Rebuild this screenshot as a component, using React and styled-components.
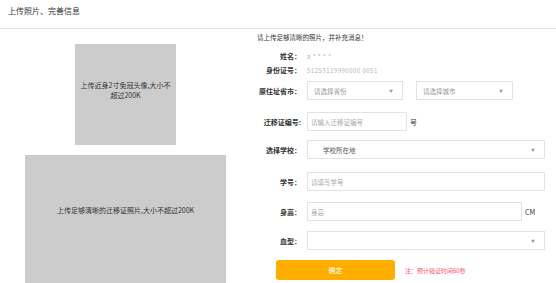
import React from 'react'
import styled, { createGlobalStyle } from 'styled-components'

const GlobalStyle = createGlobalStyle`
  html, body { margin: 0; padding: 0; background: #fff; }
  body {
    font-family: "Noto Sans CJK SC", "Noto Sans", sans-serif;
    color: #333;
  }
`

function App() {
  return (
    <>
      <GlobalStyle />
      <Header>上传照片、完善信息</Header>
      <Main>
        <PhotoColumn>
          <PhotoBox w={101} h={101} pt={37}>
            上传近身2寸免冠头像,大小不超过200K
          </PhotoBox>
          <PhotoBox w={201} h={134} pt={51}>
            上传足够清晰的迁移证照片,大小不超过200K
          </PhotoBox>
        </PhotoColumn>
        <FormColumn>
          <Notice>请上传足够清晰的照片，并补充消息！</Notice>
          <Row h={12} mt={8}>
            <Label>姓名：</Label>
            <Value>a * * * *</Value>
          </Row>
          <Row h={12} mt={2}>
            <Label>身份证号：</Label>
            <Value>51253119990000 0051</Value>
          </Row>
          <Row mt={5}>
            <Label>原住址省市：</Label>
            <Pair>
              <SelectBox w={96}>
                请选择省份<Arrow>▼</Arrow>
              </SelectBox>
              <SelectBox w={97}>
                请选择城市<Arrow>▼</Arrow>
              </SelectBox>
            </Pair>
          </Row>
          <Row mt={12}>
            <Label>迁移证编号:</Label>
            <Field w={100} placeholder="请输入迁移证编号" />
            <Suffix>号</Suffix>
          </Row>
          <Row mt={9}>
            <Label>选择学校：</Label>
            <SelectBox w={238} dark indent={15}>
              学校所在地<Arrow>▼</Arrow>
            </SelectBox>
          </Row>
          <Row mt={13}>
            <Label>学号：</Label>
            <Field w={238} placeholder="请填写学号" />
          </Row>
          <Row mt={11}>
            <Label>身高：</Label>
            <Field w={215} placeholder="身高" />
            <Suffix>CM</Suffix>
          </Row>
          <Row mt={10}>
            <Label>血型：</Label>
            <SelectBox w={238}>
              <span />
              <Arrow>▼</Arrow>
            </SelectBox>
          </Row>
          <Row h={20} mt={10}>
            <Submit>确定</Submit>
            <Hint>注：预计验证时间60秒</Hint>
          </Row>
        </FormColumn>
      </Main>
    </>
  )
}

export default App

const Header = styled.div`
  height: 29px;
  box-sizing: border-box;
  padding: 6px 0 0 8px;
  font-size: 8px;
  line-height: 10px;
  color: #333;
  border-bottom: 1px solid #e4e4e4;
`

const Main = styled.div`
  display: flex;
`

const PhotoColumn = styled.div`
  width: 251px;
  flex-shrink: 0;
  display: flex;
  flex-direction: column;
  align-items: center;
  gap: 10px;
  padding-top: 15px;
`

const PhotoBox = styled.div`
  width: ${p => p.w}px;
  height: ${p => p.h}px;
  box-sizing: border-box;
  padding: ${p => p.pt}px 4px 0;
  background: #cccccc;
  font-size: 7px;
  line-height: 9.5px;
  text-align: center;
  color: #333;
`

const FormColumn = styled.div`
  flex: 1;
  display: flex;
  flex-direction: column;
  padding-top: 4px;
`

const Notice = styled.div`
  margin-left: 6px;
  font-size: 6.5px;
  line-height: 9px;
  color: #333;
`

const Row = styled.div`
  display: flex;
  align-items: center;
  height: ${p => p.h || 19}px;
  margin-top: ${p => p.mt || 0}px;
`

const Label = styled.div`
  width: 50px;
  flex-shrink: 0;
  margin-right: 6px;
  text-align: right;
  white-space: nowrap;
  font-size: 7px;
  font-weight: bold;
  color: #333;
`

const Value = styled.div`
  font-size: 6px;
  color: #b5b5b5;
  letter-spacing: 0.5px;
`

const Pair = styled.div`
  display: flex;
  gap: 13px;
`

const SelectBox = styled.div`
  width: ${p => p.w}px;
  height: 19px;
  box-sizing: border-box;
  display: flex;
  align-items: center;
  justify-content: space-between;
  padding: 0 9px 0 ${p => p.indent || 6}px;
  border: 1px solid #e3e3e3;
  background: #fff;
  font-size: 6.5px;
  color: ${p => (p.dark ? '#555' : '#999')};
`

const Arrow = styled.span`
  font-size: 4px;
  color: #999;
`

const Field = styled.input`
  width: ${p => p.w}px;
  height: 19px;
  box-sizing: border-box;
  margin: 0;
  padding: 0 3px;
  border: 1px solid #e3e3e3;
  outline: none;
  font-family: inherit;
  font-size: 6.5px;
  color: #333;
  &::placeholder {
    color: #aaa;
  }
`

const Suffix = styled.span`
  margin-left: 3px;
  font-size: 7px;
  color: #333;
`

const Submit = styled.div`
  width: 119px;
  height: 20px;
  margin-left: 25px;
  border-radius: 3px;
  background: #ffae00;
  color: #fff;
  font-size: 7px;
  display: flex;
  align-items: center;
  justify-content: center;
`

const Hint = styled.span`
  margin-left: 10px;
  font-size: 6px;
  color: #ff4d6a;
`
